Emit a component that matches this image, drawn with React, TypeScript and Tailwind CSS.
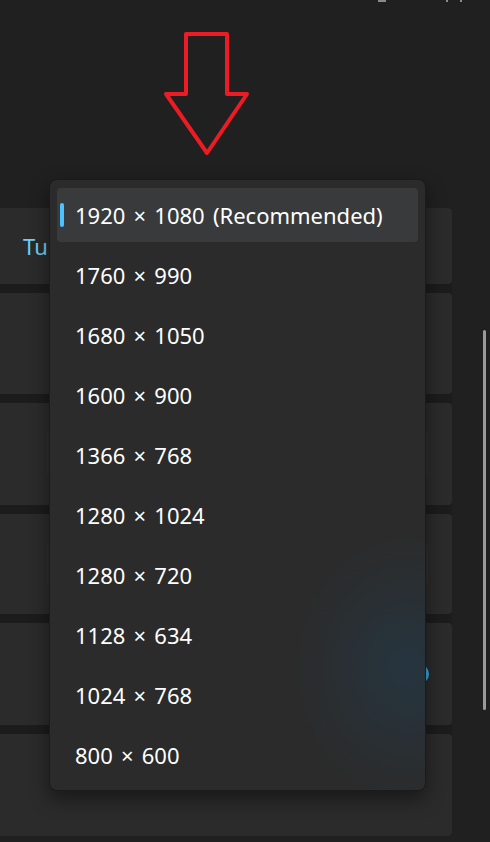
import React from "react";

const items = [
  "1920 × 1080 (Recommended)",
  "1760 × 990",
  "1680 × 1050",
  "1600 × 900",
  "1366 × 768",
  "1280 × 1024",
  "1280 × 720",
  "1128 × 634",
  "1024 × 768",
  "800 × 600",
];

export default function App() {
  return (
    <div
      className="relative w-[490px] h-[842px] overflow-hidden bg-[#202020] text-white"
      style={{ fontFamily: '"Noto Sans", "Open Sans", sans-serif' }}
    >
      {/* top cut-off window controls */}
      <div className="absolute left-[378px] top-0 w-[8px] h-[2px] bg-[#8a8a8a]" />
      <div className="absolute left-[446px] top-0 w-[2px] h-[2px] bg-[#8a8a8a]" />
      <div className="absolute left-[460px] top-0 w-[2px] h-[2px] bg-[#8a8a8a]" />

      {/* background cards */}
      <div className="pt-[208px]">
        <div className="ml-[-8px] w-[460px] flex flex-col gap-[9px] bg-[#1c1c1c]">
          <div className="h-[76px] rounded-[4px] bg-[#2b2b2b] flex items-center pl-[31px]">
            <span className="text-[22px] text-[#6dcff6]">Tu</span>
          </div>
          <div className="h-[101px] rounded-[4px] bg-[#2b2b2b]" />
          <div className="h-[102px] rounded-[4px] bg-[#2b2b2b] flex items-center pl-[54px] pr-[24px]">
            <div className="h-[46px] w-full rounded-[4px] bg-[#2f2f2f]" />
          </div>
          <div className="h-[100px] rounded-[4px] bg-[#2b2b2b] flex items-center pl-[54px] pr-[24px]">
            <div className="h-[42px] w-full rounded-[4px] bg-[#2f2f2f]" />
          </div>
          <div className="h-[102px] rounded-[4px] bg-[#2b2b2b] flex items-center justify-end pr-[23px]">
            <div className="h-[20px] w-[40px] rounded-full bg-[#3aa8df]" />
          </div>
          <div className="h-[102px] rounded-[4px] bg-[#2b2b2b]" />
        </div>
      </div>

      {/* scrollbar */}
      <div className="absolute left-[483px] top-[330px] w-[3px] h-[380px] rounded-full bg-[#9a9a9a]" />

      {/* red arrow annotation */}
      <svg
        className="absolute left-0 top-0"
        width="490"
        height="170"
        viewBox="0 0 490 170"
      >
        <polygon
          points="186,34 227,34 227,94 247,94 207,153 166,94 186,94"
          fill="none"
          stroke="#ed1c24"
          strokeWidth="4"
          strokeLinejoin="round"
        />
      </svg>

      {/* dropdown menu */}
      <div className="absolute left-[49px] top-[179px] w-[377px] rounded-[8px] border border-[#1b1b1b] bg-[#2b2b2b] bg-[radial-gradient(ellipse_30%_22%_at_95%_80%,#25353f_0%,#293035_50%,transparent_100%)] shadow-[0_8px_20px_rgba(0,0,0,0.45)] px-[7px] py-[8px] flex flex-col gap-[6px]">
        {items.map((t, i) => (
          <div
            key={t}
            className={
              i === 0
                ? "relative h-[54px] rounded-[4px] bg-[#383a3b] flex items-center pl-[18px]"
                : "relative h-[54px] rounded-[4px] flex items-center pl-[18px]"
            }
          >
            {i === 0 && (
              <div className="absolute left-[3px] top-[15px] w-[4px] h-[24px] rounded-full bg-[#4cc2ff]" />
            )}
            <span className="text-[22px] leading-none text-white [word-spacing:2.5px]">{t}</span>
          </div>
        ))}
      </div>
    </div>
  );
}
